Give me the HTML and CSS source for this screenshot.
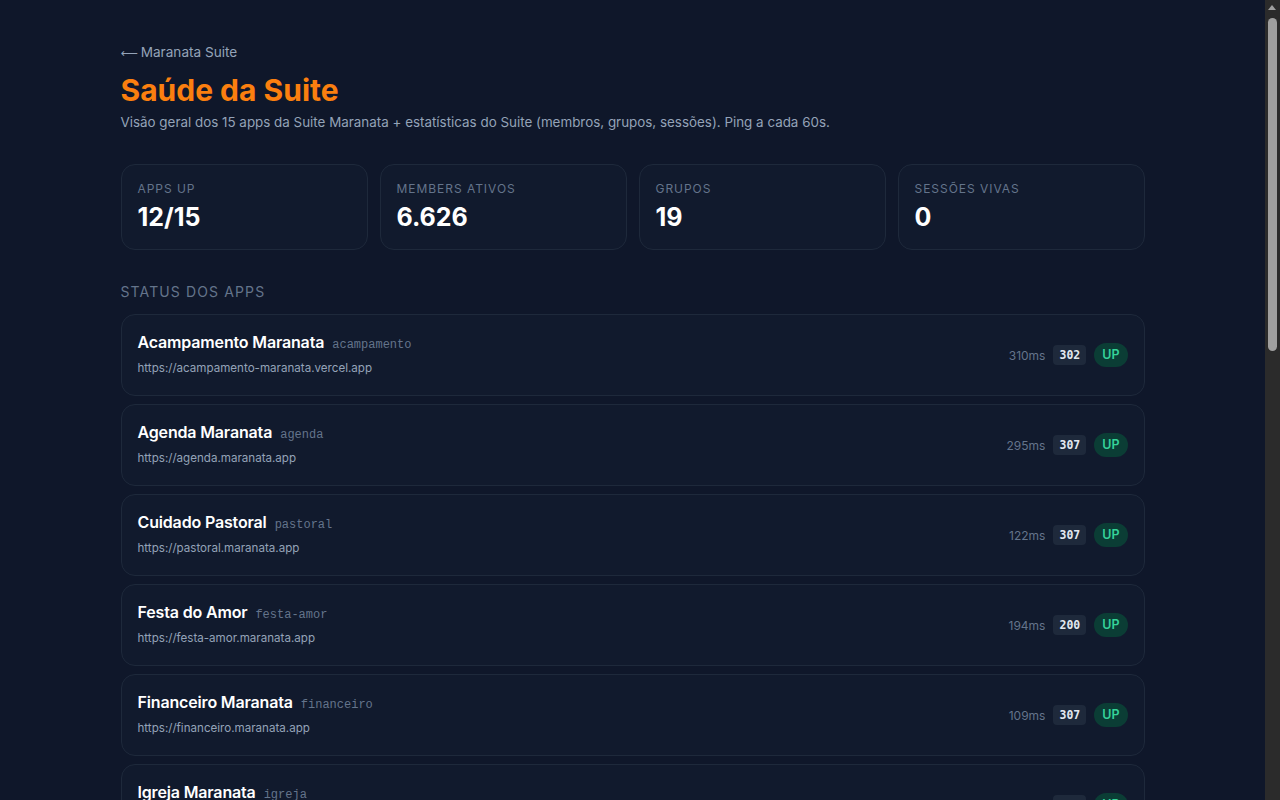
FILE: index.html
```html
<!DOCTYPE html>
<html lang="pt-BR">
<head>
    <meta charset="UTF-8">
    <meta name="viewport" content="width=device-width, initial-scale=1.0">
    <title>Saúde da Suite - Maranata</title>
    <link rel="stylesheet" href="styles.css">
</head>
<body>
<main class="page">
    <a class="back" href="#"><span class="back-arrow">&#x27F5;</span>Maranata Suite</a>
    <h1>Saúde da Suite</h1>
    <p class="lead">Visão geral dos 15 apps da Suite Maranata + estatísticas do Suite (membros, grupos, sessões). Ping a cada 60s.</p>

    <section class="stats">
        <div class="stat">
            <div class="stat-label">Apps up</div>
            <div class="stat-value">12/15</div>
        </div>
        <div class="stat">
            <div class="stat-label">Members ativos</div>
            <div class="stat-value">6.626</div>
        </div>
        <div class="stat">
            <div class="stat-label">Grupos</div>
            <div class="stat-value">19</div>
        </div>
        <div class="stat">
            <div class="stat-label">Sessões vivas</div>
            <div class="stat-value">0</div>
        </div>
    </section>

    <h2 class="section-title">Status dos apps</h2>
    <ul class="apps">
        <li class="app">
            <div class="app-info">
                <div class="app-head"><span class="app-name">Acampamento Maranata</span><code class="app-slug">acampamento</code></div>
                <div class="app-url">https://acampamento-maranata.vercel.app</div>
            </div>
            <div class="app-status"><span class="ms">310ms</span><code class="code">302</code><span class="pill up">UP</span></div>
        </li>
        <li class="app">
            <div class="app-info">
                <div class="app-head"><span class="app-name">Agenda Maranata</span><code class="app-slug">agenda</code></div>
                <div class="app-url">https://agenda.maranata.app</div>
            </div>
            <div class="app-status"><span class="ms">295ms</span><code class="code">307</code><span class="pill up">UP</span></div>
        </li>
        <li class="app">
            <div class="app-info">
                <div class="app-head"><span class="app-name">Cuidado Pastoral</span><code class="app-slug">pastoral</code></div>
                <div class="app-url">https://pastoral.maranata.app</div>
            </div>
            <div class="app-status"><span class="ms">122ms</span><code class="code">307</code><span class="pill up">UP</span></div>
        </li>
        <li class="app">
            <div class="app-info">
                <div class="app-head"><span class="app-name">Festa do Amor</span><code class="app-slug">festa-amor</code></div>
                <div class="app-url">https://festa-amor.maranata.app</div>
            </div>
            <div class="app-status"><span class="ms">194ms</span><code class="code">200</code><span class="pill up">UP</span></div>
        </li>
        <li class="app">
            <div class="app-info">
                <div class="app-head"><span class="app-name">Financeiro Maranata</span><code class="app-slug">financeiro</code></div>
                <div class="app-url">https://financeiro.maranata.app</div>
            </div>
            <div class="app-status"><span class="ms">109ms</span><code class="code">307</code><span class="pill up">UP</span></div>
        </li>
        <li class="app">
            <div class="app-info">
                <div class="app-head"><span class="app-name">Igreja Maranata</span><code class="app-slug">igreja</code></div>
                <div class="app-url">https://igreja.maranata.app</div>
            </div>
            <div class="app-status"><span class="ms">141ms</span><code class="code">200</code><span class="pill up">UP</span></div>
        </li>
        <li class="app">
            <div class="app-info">
                <div class="app-head"><span class="app-name">Louvor Maranata</span><code class="app-slug">louvor</code></div>
                <div class="app-url">https://louvor.maranata.app</div>
            </div>
            <div class="app-status"><span class="ms">188ms</span><code class="code">307</code><span class="pill up">UP</span></div>
        </li>
    </ul>
</main>

<div class="scroll-rail" aria-hidden="true">
    <span class="scroll-arrow"></span>
    <span class="scroll-thumb"></span>
</div>
</body>
</html>
```

FILE: styles.css
```css
* { box-sizing: border-box; }
body { margin: 0; padding-right: 15px; background: #0f172a; color: #e2e8f0; font-family: Inter, "Noto Sans", sans-serif; }
.page { max-width: 1024px; margin: 0 auto; padding: 40px 0 48px; }

/* window scrollbar, drawn over the right edge */
.scroll-rail { position: fixed; top: 0; right: 0; bottom: 0; width: 15px; background: #2b2b2b; }
.scroll-arrow { position: absolute; top: 5px; left: 3px; width: 0; height: 0; border-left: 4.5px solid transparent; border-right: 4.5px solid transparent; border-bottom: 5px solid #9f9f9f; }
.scroll-thumb { position: absolute; top: 18px; left: 3px; width: 9px; height: 333px; border-radius: 5px; background: #9f9f9f; }

.back { display: block; height: 24px; font-size: 13.6px; line-height: 24px; color: #94a3b8; text-decoration: none; }
.back-arrow { font-family: "DejaVu Sans", sans-serif; font-size: 12px; line-height: 0; margin-right: 3px; }
h1 { margin: 6px 0 0; font-size: 30px; line-height: 40px; font-weight: 700; color: #fb7f0f; }
.lead { margin: 2px 0 0; font-size: 13.4px; line-height: 20px; color: #94a3b8; }

.stats { display: grid; grid-template-columns: repeat(4, 1fr); gap: 12px; margin-top: 32px; }
.stat { background: #111a2d; border: 1px solid #1e293b; border-radius: 14px; padding: 16px; height: 86px; }
.stat-label { font-size: 12px; line-height: 16px; letter-spacing: 0.08em; text-transform: uppercase; color: #64748b; }
.stat-value { margin-top: 4px; font-size: 25px; line-height: 32px; font-weight: 700; color: #fff; }

.section-title { margin: 32px 0 12px; font-size: 14px; line-height: 20px; font-weight: 400; letter-spacing: 0.08em; text-transform: uppercase; color: #64748b; }

.apps { list-style: none; margin: 0; padding: 0; display: flex; flex-direction: column; gap: 8px; }
.app { display: flex; align-items: center; justify-content: space-between; background: #111a2d; border: 1px solid #1e293b; border-radius: 14px; padding: 16px; height: 82px; }
.app-info { margin-bottom: 4px; }
.app-head { display: flex; align-items: baseline; gap: 8px; }
.app-name { font-size: 16px; line-height: 24px; font-weight: 600; letter-spacing: -0.01em; color: #fff; }
.app-slug { font-family: "Liberation Mono", "DejaVu Sans Mono", monospace; font-size: 12px; color: #64748b; }
.app-url { margin-top: 6px; font-size: 11.6px; line-height: 16px; color: #94a3b8; }

.app-status { display: flex; align-items: center; gap: 8px; }
.ms { font-size: 12px; color: #64748b; }
.code { font-family: "DejaVu Sans Mono", "Liberation Mono", monospace; font-size: 11.5px; line-height: 16px; font-weight: 600; color: #e2e8f0; background: #1e293b; border-radius: 4px; padding: 2px 6px; }
.pill { font-size: 12.5px; line-height: 16px; font-weight: 600; border-radius: 999px; padding: 4px 8px; }
.pill.up { background: #0b3d35; color: #34d399; }
```
